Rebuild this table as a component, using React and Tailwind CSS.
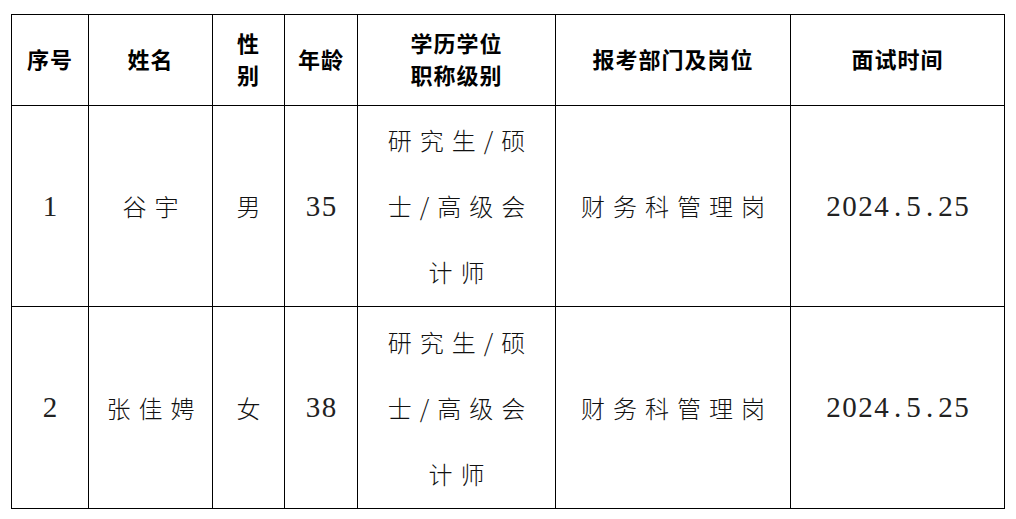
import React from "react";

const cjk = { fontFamily: '"Noto Sans CJK SC", "Noto Sans", sans-serif' };

function Num({ children }) {
  return (
    <span className="inline-flex font-['Liberation_Serif','Noto_Sans_CJK_SC',serif] text-[29px] leading-none text-[#222] align-middle">
      {String(children)
        .split("")
        .map((c, i) => (
          <span key={i} className="inline-block w-[16px] text-center">
            {c}
          </span>
        ))}
    </span>
  );
}

const txt =
  "font-['Noto_Sans_CJK_SC',sans-serif] font-light text-[24px] tracking-[8px] pl-[8px] text-[#111]";

function Txt({ children }) {
  return <span className={txt}>{children}</span>;
}

const th =
  "border-[1.5px] border-black text-center align-middle font-['Noto_Sans_CJK_SC',sans-serif] font-bold text-[22px] leading-[32px] tracking-[1px] text-black p-0 pb-[4px]";
const td = "border-[1.5px] border-black text-center align-middle p-0";

function Row({ no, name, sex, age, h }) {
  return (
    <tr className={h}>
      <td className={td}><Num>{no}</Num></td>
      <td className={td}><Txt>{name}</Txt></td>
      <td className={td}><Txt>{sex}</Txt></td>
      <td className={td}><Num>{age}</Num></td>
      <td className={td}>
        <div className={txt + " h-[66px] leading-[66px]"}>研究生/硕</div>
        <div className={txt + " h-[66px] leading-[66px]"}>士/高级会</div>
        <div className={txt + " h-[66px] leading-[66px]"}>计师</div>
      </td>
      <td className={td}><Txt>财务科管理岗</Txt></td>
      <td className={td}><Num>2024.5.25</Num></td>
    </tr>
  );
}

export default function App() {
  return (
    <div className="w-[1016px] h-[519px] bg-white pt-[14px] pl-[11px]" style={cjk}>
      <table className="table-fixed border-collapse w-[993px]">
        <colgroup>
          <col className="w-[77px]" />
          <col className="w-[124px]" />
          <col className="w-[72px]" />
          <col className="w-[73px]" />
          <col className="w-[198px]" />
          <col className="w-[235px]" />
          <col className="w-[214px]" />
        </colgroup>
        <thead>
          <tr className="h-[91px]">
            <th className={th}>序号</th>
            <th className={th}>姓名</th>
            <th className={th}>性<br />别</th>
            <th className={th}>年龄</th>
            <th className={th}>学历学位<br />职称级别</th>
            <th className={th}>报考部门及岗位</th>
            <th className={th}>面试时间</th>
          </tr>
        </thead>
        <tbody>
          <Row no="1" name="谷宇" sex="男" age="35" h="h-[201px]" />
          <Row no="2" name="张佳娉" sex="女" age="38" h="h-[202px]" />
        </tbody>
      </table>
    </div>
  );
}
